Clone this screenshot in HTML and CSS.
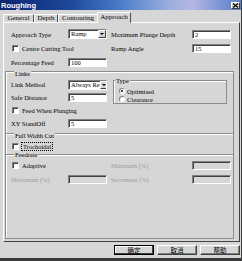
FILE: index.html
```html
<!DOCTYPE html>
<html lang="en">
<head>
    <meta charset="UTF-8">
    <title>Roughing</title>
    <link rel="stylesheet" href="styles.css">
</head>
<body>
  <div class="dialog">
    <div class="titlebar">
      <span class="title">Roughing</span>
      <span class="close">
        <svg width="7" height="5" viewBox="0 0 7 5"><path d="M1 0.5 L6 4.5 M6 0.5 L1 4.5" stroke="#000" stroke-width="1.2"/></svg>
      </span>
    </div>

    <div class="tabs">
      <span class="tab t-general">General</span>
      <span class="tab t-depth">Depth</span>
      <span class="tab t-contour">Contouring</span>
      <span class="tab active">Approach</span>
    </div>

    <div class="panel">
      <div class="grid top">
        <span class="lbl c1">Approach Type</span>
        <span class="select c2"><span class="val">Ramp</span><span class="arrow"></span></span>
        <span class="lbl c4">Maximum Plunge Depth</span>
        <span class="input c5">2</span>

        <span class="check c12"><span class="box"></span>Centre Cutting Tool</span>
        <span class="lbl c4">Ramp Angle</span>
        <span class="input c5">15</span>

        <span class="lbl c1">Percentage Feed</span>
        <span class="input c2">100</span>
      </div>

      <div class="group links">
        <div class="gh"><span class="legend">Links</span></div>
        <div class="grid rows13">
          <div class="typebox">
            <div class="gh small"><span class="legend">Type</span></div>
            <span class="radio on"><span class="dot"></span>Optimised</span>
            <span class="radio"><span class="dot"></span>Clearance</span>
          </div>

          <span class="lbl c1">Link Method</span>
          <span class="select c2"><span class="val">Always Re</span><span class="arrow"></span></span>

          <span class="lbl c1">Safe Distance</span>
          <span class="input c2">5</span>

          <span class="check c12"><span class="box"></span>Feed When Plunging</span>

          <span class="lbl c1">XY StandOff</span>
          <span class="input c2">5</span>
        </div>
      </div>

      <div class="group fwc">
        <div class="gh"><span class="legend">Full Width Cut</span></div>
        <div class="grid rows13">
          <span class="check c12"><span class="box"></span><span class="focus">Trochoidal</span></span>
        </div>
      </div>

      <div class="group feedrate">
        <div class="gh mid"><span class="legend">Feedrate</span></div>
        <div class="grid">
          <span class="check c12"><span class="box"></span>Adaptive</span>
          <span class="lbl c4 off">Minimum (%)</span>
          <span class="input c5 off"></span>

          <span class="lbl c1 off">Maximum (%)</span>
          <span class="input c2 off"></span>
          <span class="lbl c4 off">Increment (%)</span>
          <span class="input c5 off"></span>
        </div>
      </div>
    </div>

    <div class="footer">
      <button class="btn default">确定</button>
      <button class="btn">取消</button>
      <button class="btn">帮助</button>
    </div>
  </div>
</body>
</html>
```

FILE: styles.css
```css
* {
    margin: 0;
    padding: 0;
    box-sizing: border-box;
}
body {
    width: 242px;
    height: 261px;
    overflow: hidden;
    background: #d4d4d4;
    font-family: "Liberation Serif", serif;
    font-size: 6.5px;
    color: #000;
}
.dialog {
    width: 242px;
    height: 261px;
    display: flex;
    flex-direction: column;
    background: #d6d6d6;
    border-right: 1px solid #404040;
    border-bottom: 3px solid #3a3a3a;
}

/* title */
.titlebar {
    height: 10px;
    display: flex;
    align-items: center;
    justify-content: space-between;
    padding: 0 1px 0 1px;
    background: linear-gradient(90deg, #0c2470 0%, #1f4a9c 30%, #4a7cc8 50%, #9aaee0 70%, #b4b8e4 80%, #7894d4 92%, #5a80cc 100%);
}
.title {
    font-family: "Liberation Sans", sans-serif;
    font-weight: bold;
    font-size: 7.5px;
    color: #fff;
}
.close {
    width: 9px;
    height: 7px;
    display: flex;
    align-items: center;
    justify-content: center;
    background: #d4d4d4;
    border: 1px solid;
    border-color: #fff #404040 #404040 #fff;
}

/* tabs */
.tabs {
    height: 12px;
    display: flex;
    align-items: flex-end;
    padding-left: 3px;
    font-size: 7px;
}
.tab {
    height: 8px;
    line-height: 7px;
    text-align: center;
    border: 1px solid;
    border-bottom: none;
    border-color: #fff #505050 transparent #fff;
    border-radius: 1px 1px 0 0;
}
.t-general { width: 31px; }
.t-depth { width: 24px; }
.t-contour { width: 40px; }
.tab.active {
    position: relative;
    width: 34px;
    height: 11px;
    line-height: 9px;
    margin-bottom: -1px;
    margin-left: -1px;
    background: #d6d6d6;
}

/* panel */
.panel {
    flex: 1;
    display: flex;
    flex-direction: column;
    margin: 0 1px 0 3px;
    padding-top: 4px;
    border: 1px solid;
    border-color: #fff #404040 #404040 #fff;
}
.grid {
    display: grid;
    grid-template-columns: 57px 39px 4px 81px 39px;
    grid-auto-rows: 14px;
    align-items: center;
}
.grid.top {
    padding-left: 7px;
}
.grid.rows13 {
    grid-auto-rows: 13px;
}
.c1 { grid-column: 1; }
.c2 { grid-column: 2; }
.c4 { grid-column: 4; }
.c5 { grid-column: 5; }
.c12 { grid-column: 1 / span 2; }
.lbl {
    white-space: nowrap;
}
.off {
    color: #9c9c9c;
}

/* controls */
.input,
.select {
    height: 9px;
    line-height: 7px;
    padding-left: 2px;
    background: #fff;
    border: 1px solid;
    border-color: #808080 #fff #fff #808080;
    box-shadow: inset 1px 1px 0 #404040;
    white-space: nowrap;
    overflow: hidden;
}
.input.off {
    background: #d6d6d6;
}
.select {
    display: flex;
    justify-content: space-between;
    height: 10px;
    padding-right: 0;
}
.arrow {
    width: 8px;
    height: 8px;
    flex: none;
    display: flex;
    align-items: center;
    justify-content: center;
    background: #d4d4d4;
    border: 1px solid;
    border-color: #fff #404040 #404040 #fff;
}
.arrow::after {
    content: "";
    border-left: 2px solid transparent;
    border-right: 2px solid transparent;
    border-top: 2px solid #000;
}
.check {
    display: flex;
    align-items: center;
    gap: 3px;
    padding-left: 1px;
    white-space: nowrap;
}
.box {
    width: 7px;
    height: 7px;
    background: #fff;
    border: 1px solid;
    border-color: #808080 #fff #fff #808080;
    box-shadow: inset 1px 1px 0 #404040;
}
.focus {
    outline: 1px dotted #000;
    padding: 0 1px;
}
.radio {
    display: flex;
    align-items: center;
    gap: 2px;
    height: 8px;
    padding-left: 5px;
}
.dot {
    width: 6px;
    height: 6px;
    border-radius: 50%;
    background: #fff;
    border: 1px solid;
    border-color: #808080 #fff #fff #808080;
    display: flex;
    align-items: center;
    justify-content: center;
}
.radio.on .dot::after {
    content: "";
    width: 2px;
    height: 2px;
    border-radius: 50%;
    background: #000;
}

/* groups */
.group {
    width: 229px;
    margin-left: 1px;
    padding-left: 5px;
    border: 1px solid #8c8c8c;
    border-bottom: none;
    box-shadow: inset 1px 1px 0 #fff;
}
.links {
    margin-top: 2px;
    padding-bottom: 3px;
}
.fwc {
    padding-bottom: 1px;
}
.feedrate {
    flex: 1;
    margin-bottom: 2px;
    border-bottom: 1px solid #8c8c8c;
}
.gh {
    height: 8px;
    line-height: 8px;
    margin-top: -2px;
}
.gh.mid {
    margin-top: -4px;
    height: 7px;
}
.legend {
    display: inline-block;
    background: #d6d6d6;
    padding: 0 1px;
    margin-left: 3px;
}
.typebox {
    grid-column: 4 / span 2;
    grid-row: 1 / span 2;
    align-self: stretch;
    margin: 2px 4px 0 2px;
    border: 1px solid #8c8c8c;
    box-shadow: inset 1px 1px 0 #fff;
}
.gh.small {
    height: 10px;
    line-height: 7px;
    margin-top: -4px;
}
.gh.small .legend {
    margin-left: 1px;
}

/* footer */
.footer {
    height: 16px;
    display: flex;
    justify-content: flex-end;
    gap: 3px;
    padding: 3px 1px 0 0;
}
.btn {
    width: 40px;
    height: 10px;
    font-family: "Noto Sans CJK SC", sans-serif;
    font-size: 6.5px;
    line-height: 7px;
    background: #d6d6d6;
    border: 1px solid;
    border-color: #fff #404040 #404040 #fff;
    box-shadow: inset -1px -1px 0 #808080;
}
.btn.default {
    outline: 1px solid #000;
    outline-offset: -1px;
    box-shadow: inset -1px -1px 0 #404040, inset 1px 1px 0 #fff;
}
```
